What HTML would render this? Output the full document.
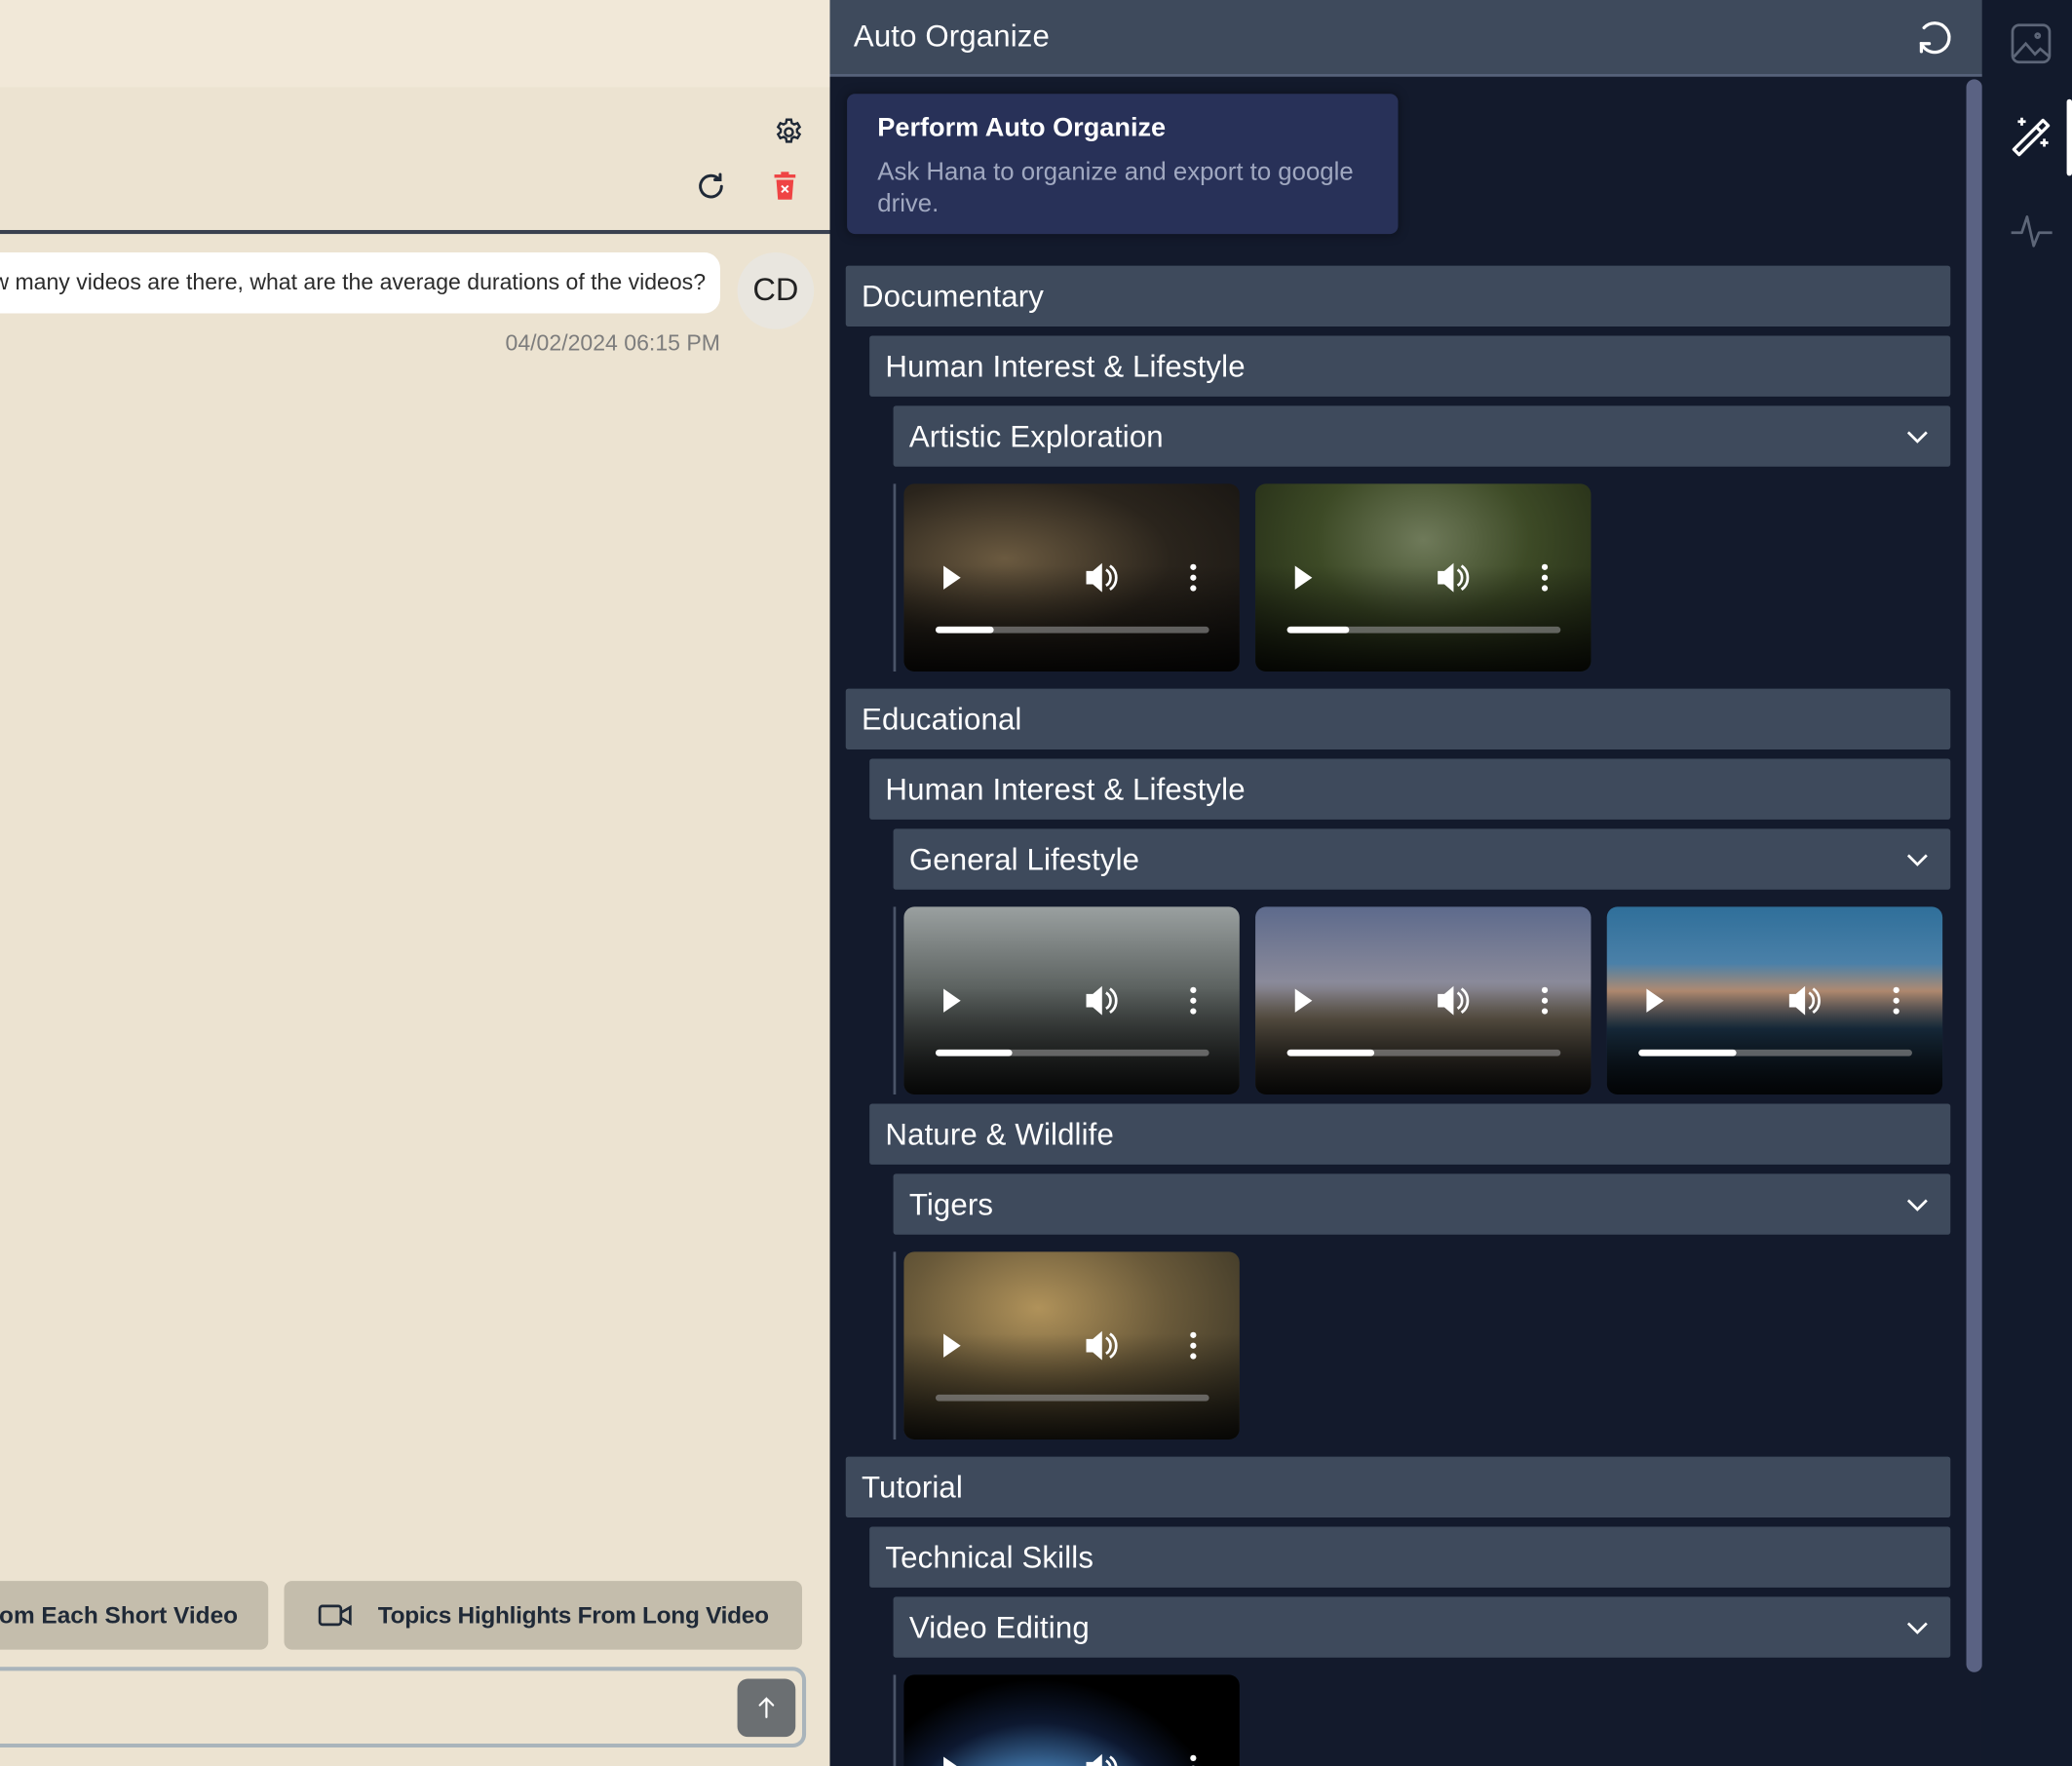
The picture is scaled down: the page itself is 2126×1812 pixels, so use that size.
<!DOCTYPE html>
<html><head><meta charset="utf-8"><style>
*{box-sizing:border-box;margin:0;padding:0}
html,body{width:2126px;height:1812px;overflow:hidden;background:#131a2c;font-family:"Liberation Sans",Arial,sans-serif}
#w{position:absolute;left:0;top:0;width:1568px;height:1336px;transform:scale(1.35587,1.35629);transform-origin:0 0;overflow:hidden}
.a{position:absolute}
.left{left:0;top:0;width:628px;height:1336px;background:#ece3d1;overflow:hidden}
.row{position:absolute;background:#3e4a5c;color:#fff;font-size:23px;height:46px;line-height:46px;padding-left:12px;border-radius:2px;letter-spacing:.1px}
.chev{position:absolute;right:16px;top:16px}
.vline{position:absolute;width:2px;background:#4a5468}
.th{position:absolute;width:254px;height:142px;border-radius:8px;overflow:hidden}
.th .shade{position:absolute;left:0;right:0;bottom:0;height:80px;background:linear-gradient(transparent,rgba(0,0,0,.85))}
.bar{position:absolute;left:24px;top:108px;width:207px;height:5px;border-radius:3px;background:rgba(150,150,150,.6)}
.bar i{display:block;height:5px;border-radius:3px;background:#fff}
.rt{display:flex;justify-content:flex-end;align-items:center;white-space:nowrap;overflow:hidden}
</style></head><body><div id="w">
<div class="a left">
 <div class="a" style="left:0;top:0;width:628px;height:66px;background:#f1e8d8"></div>
 <div class="a" style="left:0;top:174px;width:628px;height:3px;background:#3a4150"></div>
 <svg class="a" style="left:585px;top:88px" width="24" height="24" viewBox="0 0 24 24" fill="none" stroke="#1f2937" stroke-width="1.8"><circle cx="12" cy="12" r="3"/><path d="M10.3 2.5h3.4l.5 2.6 1.8 1 2.5-.9 1.7 2.9-2 1.7v2.1l2 1.7-1.7 2.9-2.5-.9-1.8 1-.5 2.6h-3.4l-.5-2.6-1.8-1-2.5.9-1.7-2.9 2-1.7v-2.1l-2-1.7 1.7-2.9 2.5.9 1.8-1z"/></svg>
 <svg class="a" style="left:526px;top:129px" width="24" height="24" viewBox="0 0 24 24" fill="none" stroke="#1f2937" stroke-width="2.2" stroke-linecap="round"><path d="M20 12a8 8 0 1 1-2.3-5.7"/><path d="M19 3v4h-4"/></svg>
 <svg class="a" style="left:584px;top:129px" width="20" height="24" viewBox="0 0 20 24"><rect x="2" y="3" width="16" height="2.5" fill="#ef4444"/><rect x="7" y="1" width="6" height="3" fill="#ef4444"/><path d="M3.5 7h13l-1.2 15H4.7z" fill="#ef4444"/><path d="M7.5 11.5l5 5M12.5 11.5l-5 5" stroke="#fff" stroke-width="1.5"/></svg>
 <div class="a rt" style="left:-20px;top:191px;width:565px;height:46px;background:#fff;border-radius:12px;font-size:17px;color:#2b2b2b;padding-right:11px">How many videos are there, what are the average durations of the videos?</div>
 <div class="a" style="left:558px;top:191px;width:58px;height:58px;border-radius:50%;background:#e9e6df;font-size:24px;line-height:58px;text-align:center;color:#222">CD</div>
 <div class="a" style="left:300px;top:250px;width:245px;text-align:right;font-size:17px;color:#7d7d7d">04/02/2024 06:15 PM</div>
 <div class="a rt" style="left:-20px;top:1196px;width:223px;height:52px;background:#c4bdac;border-radius:6px;font-size:18px;font-weight:bold;color:#1f2937;padding-right:23px">Key Points From Each Short Video</div>
 <div class="a" style="left:215px;top:1196px;width:392px;height:52px;background:#c4bdac;border-radius:6px;font-size:18px;font-weight:bold;color:#1f2937;line-height:52px;padding-left:71px;white-space:nowrap;letter-spacing:-.2px">Topics Highlights From Long Video</div>
 <svg class="a" style="left:240px;top:1212px" width="28" height="20" viewBox="0 0 28 20" fill="none" stroke="#1f2937" stroke-width="2"><rect x="2" y="3" width="16" height="14" rx="2"/><path d="M18 8l7-4v12l-7-4"/></svg>
 <div class="a" style="left:-20px;top:1261px;width:630px;height:61px;border:3px solid #a9b4bb;border-radius:10px"></div>
 <div class="a" style="left:558px;top:1270px;width:44px;height:44px;background:#6b6f72;border-radius:8px"></div>
 <svg class="a" style="left:570px;top:1282px" width="20" height="20" viewBox="0 0 20 20" fill="none" stroke="#fff" stroke-width="1.6" stroke-linecap="round"><path d="M10 17V3M5 8l5-5 5 5"/></svg>
</div>
<div class="a" style="left:628px;top:0;width:872px;height:58px;background:#3e4a5c;border-bottom:2px solid #56627a"></div>
<div class="a" style="left:646px;top:14px;font-size:23px;color:#fff;letter-spacing:.1px">Auto Organize</div>
<svg class="a" style="left:1448px;top:13px" width="32" height="32" viewBox="0 0 32 32" fill="none" stroke="#fff" stroke-width="2.4" stroke-linecap="round"><path d="M6 20a11 11 0 1 0 2-12"/><path d="M6 26v-6h6"/></svg>
<div class="a" style="left:1488px;top:60px;width:12px;height:1205px;background:#5a6283;border-radius:6px"></div>
<div class="a" style="left:1500px;top:0;width:68px;height:1336px;background:#121a2c"></div>
<svg class="a" style="left:1520px;top:16px" width="34" height="34" viewBox="0 0 34 34" fill="none" stroke="#5d6678" stroke-width="2"><rect x="3" y="3" width="28" height="28" rx="5"/><path d="M4 27l9-10 7 8 4-4 7 6"/><circle cx="22" cy="11" r="1.5"/></svg>
<svg class="a" style="left:1520px;top:86px" width="34" height="34" viewBox="0 0 34 34" fill="none" stroke="#fff" stroke-width="2.4" stroke-linejoin="round"><path d="M4 27L26 5l4 4L8 31z"/><path d="M21 10l4 4"/><path d="M10 3v6M7 6h6M27 19v6M24 22h6" stroke-width="2"/></svg>
<div class="a" style="left:1564px;top:75px;width:4px;height:58px;background:#fff;border-radius:2px"></div>
<svg class="a" style="left:1520px;top:158px" width="34" height="34" viewBox="0 0 34 34" fill="none" stroke="#5d6678" stroke-width="2" stroke-linejoin="round"><path d="M2 18h8l4-12 5 22 4-10h10"/></svg>
<div class="a" style="left:641px;top:71px;width:417px;height:106px;background:#283158;border-radius:6px;box-shadow:0 0 8px rgba(0,0,0,.4)"></div>
<div class="a" style="left:664px;top:86px;font-size:20px;font-weight:bold;color:#fff">Perform Auto Organize</div>
<div class="a" style="left:664px;top:119px;width:385px;font-size:19px;line-height:24px;color:#a0a8c0">Ask Hana to organize and export to google drive.</div>

<div class="row" style="left:640px;top:201px;width:836px">Documentary</div>
<div class="row" style="left:658px;top:254px;width:818px">Human Interest &amp; Lifestyle</div>
<div class="row" style="left:676px;top:307px;width:800px">Artistic Exploration<svg class="chev" width="18" height="14" viewBox="0 0 18 14" fill="none" stroke="#fff" stroke-width="2"><path d="M2 4l7 7 7-7"/></svg></div>
<div class="vline" style="left:676px;top:366px;height:142px"></div>

<div class="row" style="left:640px;top:521px;width:836px">Educational</div>
<div class="row" style="left:658px;top:574px;width:818px">Human Interest &amp; Lifestyle</div>
<div class="row" style="left:676px;top:627px;width:800px">General Lifestyle<svg class="chev" width="18" height="14" viewBox="0 0 18 14" fill="none" stroke="#fff" stroke-width="2"><path d="M2 4l7 7 7-7"/></svg></div>
<div class="vline" style="left:676px;top:686px;height:142px"></div>
<div class="row" style="left:658px;top:835px;width:818px">Nature &amp; Wildlife</div>
<div class="row" style="left:676px;top:888px;width:800px">Tigers<svg class="chev" width="18" height="14" viewBox="0 0 18 14" fill="none" stroke="#fff" stroke-width="2"><path d="M2 4l7 7 7-7"/></svg></div>
<div class="vline" style="left:676px;top:947px;height:142px"></div>

<div class="row" style="left:640px;top:1102px;width:836px">Tutorial</div>
<div class="row" style="left:658px;top:1155px;width:818px">Technical Skills</div>
<div class="row" style="left:676px;top:1208px;width:800px">Video Editing<svg class="chev" width="18" height="14" viewBox="0 0 18 14" fill="none" stroke="#fff" stroke-width="2"><path d="M2 4l7 7 7-7"/></svg></div>
<div class="vline" style="left:676px;top:1267px;height:69px"></div>

<div class="th" style="left:684px;top:366px;background:radial-gradient(ellipse at 30% 40%,#6b5a40,#2a241c 50%,#141210)"><div class="shade"></div><div class="bar"><i style="width:44px"></i></div></div>
<div class="th" style="left:950px;top:366px;background:radial-gradient(ellipse at 50% 30%,#6f7a5a,#3d4a26 45%,#1d2412)"><div class="shade"></div><div class="bar"><i style="width:47px"></i></div></div>
<div class="th" style="left:684px;top:686px;background:linear-gradient(#9aa0a0,#5a605e 45%,#2a2d2c)"><div class="shade"></div><div class="bar"><i style="width:58px"></i></div></div>
<div class="th" style="left:950px;top:686px;background:linear-gradient(#5d6a8c,#8a8a9a 40%,#6a6050 60%,#2a2824)"><div class="shade"></div><div class="bar"><i style="width:66px"></i></div></div>
<div class="th" style="left:1216px;top:686px;background:linear-gradient(#2f6f9a,#4a80a8 30%,#b08a70 45%,#1f3a52 65%,#0f1a24)"><div class="shade"></div><div class="bar"><i style="width:74px"></i></div></div>
<div class="th" style="left:684px;top:947px;background:radial-gradient(ellipse at 40% 30%,#b0925a,#6a5a3a 45%,#2c2a20)"><div class="shade"></div><div class="bar"><i style="width:0"></i></div></div>
<div class="th" style="left:684px;top:1267px;background:radial-gradient(circle at 40% 110%,#8fb4d6,#3a6a9a 40%,#0d1830 55%,#000 70%)"></div>

<svg class="a" style="left:684px;top:366px" width="800" height="970" viewBox="0 0 800 970" fill="#fff">
<defs><g id="ctl"><path d="M30 -9v18l13-9z"/><path d="M138 -5h5l7-6v22l-7-6h-5z"/><path d="M153 -6a7 7 0 0 1 0 12M156 -9a11 11 0 0 1 0 18" stroke="#fff" stroke-width="2" fill="none"/><circle cx="219" cy="-8" r="2.3"/><circle cx="219" cy="0" r="2.3"/><circle cx="219" cy="8" r="2.3"/></g></defs>
<use href="#ctl" x="0" y="71"/><use href="#ctl" x="266" y="71"/>
<use href="#ctl" x="0" y="391"/><use href="#ctl" x="266" y="391"/><use href="#ctl" x="532" y="391"/>
<use href="#ctl" x="0" y="652"/><use href="#ctl" x="0" y="972"/>
</svg>
</div></body></html>
